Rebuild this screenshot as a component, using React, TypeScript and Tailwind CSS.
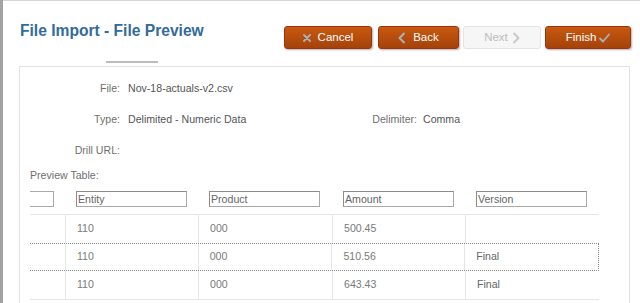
import React from "react";

const font = { fontFamily: '"Liberation Sans", Arial, sans-serif' };

function XIcon() {
  return (
    <svg width="8" height="8" viewBox="0 0 8 8" className="shrink-0">
      <path d="M1 1 L7 7 M7 1 L1 7" stroke="#aab1b8" strokeWidth="1.8" strokeLinecap="round" />
    </svg>
  );
}
function ChevLeft({ color }: { color: string }) {
  return (
    <svg width="8" height="12" viewBox="0 0 8 12" className="shrink-0">
      <path d="M6.5 1 L1.5 6 L6.5 11" stroke={color} strokeWidth="2" fill="none" strokeLinejoin="round" />
    </svg>
  );
}
function ChevRight({ color }: { color: string }) {
  return (
    <svg width="8" height="12" viewBox="0 0 8 12" className="shrink-0">
      <path d="M1.5 1 L6.5 6 L1.5 11" stroke={color} strokeWidth="2" fill="none" strokeLinejoin="round" />
    </svg>
  );
}
function Check() {
  return (
    <svg width="11" height="10" viewBox="0 0 11 10" className="shrink-0">
      <path d="M1 5.5 L4 8.5 L10 1.5" stroke="#aab1b8" strokeWidth="1.8" fill="none" strokeLinecap="round" strokeLinejoin="round" />
    </svg>
  );
}

const orange =
  "h-[23px] flex items-center justify-center rounded-[3px] border border-[#9c3410] bg-gradient-to-b from-[#c9590f] to-[#a4420b] text-white text-[11.5px] shadow-[1px_1px_2px_rgba(0,0,0,0.3)]";

const cols = [
  { w: "w-[35px]", input: "", cells: ["", "", ""] },
  { w: "w-[133px]", input: "Entity", cells: ["110", "110", "110"] },
  { w: "w-[134px]", input: "Product", cells: ["000", "000", "000"] },
  { w: "w-[133px]", input: "Amount", cells: ["500.45", "510.56", "643.43"] },
  { w: "w-[134px]", input: "Version", cells: ["", "Final", "Final"] },
];

export default function App() {
  return (
    <div className="w-[640px] h-[303px] overflow-hidden bg-white flex" style={font}>
      <div className="w-[3px] h-full bg-[#a3a3a3] shrink-0" />
      <div className="flex-1 flex flex-col border-t border-[#d6d6d6]">
        {/* header */}
        <div className="h-[60px] flex justify-between">
          <div className="pl-[17px] pt-[21px] text-[15.6px] leading-[18px] font-bold text-[#336b99]">
            File Import - File Preview
          </div>
          <div className="flex pt-[25px] pr-[9px]">
            <div className={`${orange} w-[88px] gap-[7px] mr-[6px]`}>
              <XIcon />
              <span>Cancel</span>
            </div>
            <div className={`${orange} w-[81px] gap-[7px] mr-[4px]`}>
              <ChevLeft color="#aab1b8" />
              <span>Back</span>
            </div>
            <div className="h-[23px] w-[78px] mr-[4px] flex items-center justify-center gap-[4px] rounded-[3px] border border-[#e4e4e4] bg-[#f6f6f6] text-[#bdbdbd] text-[11.5px]">
              <span>Next</span>
              <ChevRight color="#c8c8c8" />
            </div>
            <div className={`${orange} w-[86px] gap-[3px]`}>
              <span>Finish</span>
              <Check />
            </div>
          </div>
        </div>
        <div className="ml-[103px] w-[52px] h-[2px] bg-[#bcbcbc]" />
        <div className="h-[3px]" />
        {/* content box */}
        <div className="ml-[16px] mr-[10px] flex-1 border border-b-0 border-[#e3e3e3] pt-[6px] text-[10.6px] leading-[13px]">
          <div className="h-[31px] flex items-center">
            <div className="w-[100px] text-right text-[#6f6f6f]">File:</div>
            <div className="ml-[8px] text-[#555]">Nov-18-actuals-v2.csv</div>
          </div>
          <div className="h-[31px] flex items-center">
            <div className="w-[100px] text-right text-[#6f6f6f]">Type:</div>
            <div className="ml-[8px] w-[200px] text-[#555]">Delimited - Numeric Data</div>
            <div className="w-[89px] text-right text-[#6f6f6f]">Delimiter:</div>
            <div className="ml-[6px] text-[#555]">Comma</div>
          </div>
          <div className="h-[31px] flex items-center">
            <div className="w-[100px] text-right text-[#6f6f6f]">Drill URL:</div>
          </div>
          <div className="mt-[3px] pl-[10px] h-[14px] text-[#6f6f6f]">Preview Table:</div>
          <div className="ml-[10px] w-[569px]">
            <div className="h-[31px] flex items-center">
              {cols.map((c, i) => (
                <div key={i} className={`${c.w} flex ${i === 0 ? "justify-start" : "pl-[11px]"}`}>
                  <div
                    className={`${
                      i === 0
                        ? "w-[24px] border border-l-0 border-[#aaa]"
                        : "w-[111px] border border-[#8c8c8c] border-r-[#a8a8a8] border-b-[#a8a8a8]"
                    } h-[16px] pl-[1px] text-[#666] leading-[14px]`}
                  >
                    {c.input}
                  </div>
                </div>
              ))}
            </div>
            {[0, 1, 2].map((r) => (
              <div
                key={r}
                className={`h-[28.5px] flex ${
                  r === 1
                    ? "border-y border-r border-dotted border-[#8a8a8a]"
                    : r === 0
                    ? "border-t border-[#e6e6e6]"
                    : "border-b border-[#e6e6e6]"
                }`}
              >
                {cols.map((c, i) => (
                  <div
                    key={i}
                    className={`${c.w} flex items-center ${i > 0 ? "border-l border-[#e6e6e6] pl-[11px]" : ""} ${
                      i === 4 ? "text-[#666]" : "text-[#7a7a7a]"
                    }`}
                  >
                    {c.cells[r]}
                  </div>
                ))}
              </div>
            ))}
          </div>
        </div>
      </div>
    </div>
  );
}
